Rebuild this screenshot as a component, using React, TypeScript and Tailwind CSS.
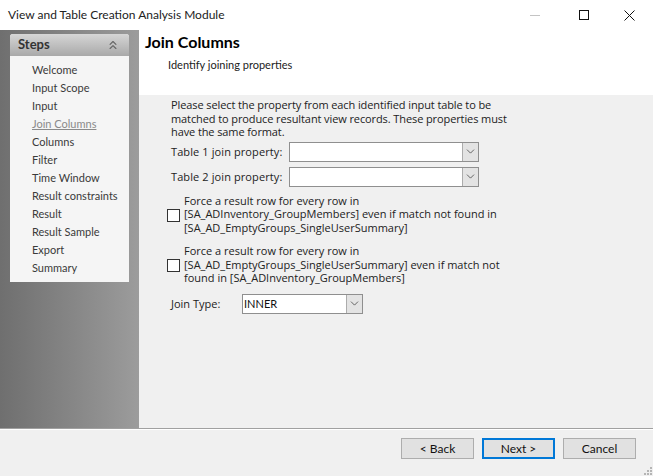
import { ChevronDown, ChevronsUp } from 'lucide-react';

const STEPS = ['Welcome', 'Input Scope', 'Input', 'Join Columns', 'Columns', 'Filter', 'Time Window', 'Result constraints', 'Result', 'Result Sample', 'Export', 'Summary'];

function Combo({ width, value, className }: { width: string; value?: string; className?: string }) {
  return (
    <div className={`flex h-[20px] border border-[#8f8f8f] bg-white ${width} ${className || ''}`}>
      <div className="flex-1 pl-[1px] font-['Lato',sans-serif] text-[11px] leading-[18px] text-[#111]">{value}</div>
      <div className="flex w-[16px] items-center justify-center border-l border-[#acacac] bg-[#e3e3e3]">
        <ChevronDown size={13} strokeWidth={1.1} className="text-[#111]" />
      </div>
    </div>
  );
}

function ForceRow({ lines, className }: { lines: string[]; className?: string }) {
  return (
    <div className={`flex items-center ${className || ''}`}>
      <div className="mt-[3px] h-[13px] w-[13px] shrink-0 border border-[#333] bg-white" />
      <div className="ml-[4px] leading-[13.5px]">
        {lines.map((l) => <div key={l} className="whitespace-nowrap">{l}</div>)}
      </div>
    </div>
  );
}

function WizButton({ label, primary }: { label: string; primary?: boolean }) {
  return (
    <div className={`flex h-[21px] w-[73px] items-center justify-center bg-[#e1e1e1] font-['Lato',sans-serif] text-[12px] text-[#111] ${primary ? 'border-2 border-[#0078d7]' : 'border border-[#adadad]'}`}>
      {label}
    </div>
  );
}

export default function App() {
  return (
    <div className="relative flex h-[476px] w-[653px] flex-col overflow-hidden bg-[#f0f0f0] font-['Open_Sans',sans-serif] text-[11px] text-[#222]">
      {/* Titlebar */}
      <div className="flex h-[30px] shrink-0 items-center bg-white pl-[8px] text-[#222]">
        <span className="flex-1 font-['Lato',sans-serif] text-[12px]">View and Table Creation Analysis Module</span>
        <div className="mr-[39px] h-[1px] w-[10px] bg-[#c4c4c4]" />
        <div className="mr-[35px] h-[10px] w-[10px] border border-[#111]" />
        <svg width="11" height="11" viewBox="0 0 11 11" className="mr-[18px]" stroke="#111" fill="none">
          <path d="M0.5 0.5 L10.5 10.5 M10.5 0.5 L0.5 10.5" />
        </svg>
      </div>

      <div className="flex h-[398px] shrink-0">
        {/* Left side */}
        <div className="w-[139px] shrink-0 bg-gradient-to-r from-[#6f6f6f] to-[#9c9c9c] pl-[10px] pt-[4px]">
          <div className="h-[248px] w-[119px] overflow-hidden rounded-t-[3px] bg-[#f5f5f5]">
            <div className="flex h-[22px] items-center justify-between bg-gradient-to-b from-[#d6d6d6] to-[#a9a9a9] pl-[8px] pr-[9px]">
              <span className="font-['Lato',sans-serif] text-[13px] font-bold text-[#333]">Steps</span>
              <ChevronsUp size={14} strokeWidth={2} className="text-[#666]" />
            </div>
            <div className="pl-[22px] pt-[5px] font-['Lato',sans-serif] text-[11px]">
              {STEPS.map((s) => (
                <div key={s} className={`h-[18px] whitespace-nowrap leading-[18px] ${s === 'Join Columns' ? 'text-[#8a8a8a] underline' : 'text-[#3a3a3a]'}`}>{s}</div>
              ))}
            </div>
          </div>
        </div>

        {/* Right side */}
        <div className="flex-1">
          <div className="h-[65px] bg-white pl-[6px] pt-[2px]">
            <div className="font-['Lato',sans-serif] text-[16px] font-bold leading-[20px] text-black">Join Columns</div>
            <div className="pl-[23px] pt-[5px] font-['Lato',sans-serif] text-[11px] leading-[16px]">Identify joining properties</div>
          </div>
          <div className="pl-[28px] pt-[3px]">
            <div className="pl-[4px] leading-[13.5px] tracking-[-0.1px]">
              <div className="whitespace-nowrap">Please select the property from each identified input table to be</div>
              <div className="whitespace-nowrap">matched to produce resultant view records. These properties must</div>
              <div className="whitespace-nowrap">have the same format.</div>
            </div>
            <div className="mt-[3px] flex items-center pl-[4px]">
              <span className="w-[118px] whitespace-nowrap pt-[1px] tracking-[0.1px]">Table 1 join property:</span>
              <Combo width="w-[190px]" />
            </div>
            <div className="mt-[5px] flex items-center pl-[4px]">
              <span className="w-[118px] whitespace-nowrap pt-[1px] tracking-[0.1px]">Table 2 join property:</span>
              <Combo width="w-[190px]" />
            </div>
            <ForceRow className="mt-[7px]" lines={['Force a result row for every row in', '[SA_ADInventory_GroupMembers] even if match not found in', '[SA_AD_EmptyGroups_SingleUserSummary]']} />
            <ForceRow className="mt-[10px]" lines={['Force a result row for every row in', '[SA_AD_EmptyGroups_SingleUserSummary] even if match not', 'found in [SA_ADInventory_GroupMembers]']} />
            <div className="mt-[9px] flex items-center pl-[4px]">
              <span className="w-[71px] whitespace-nowrap pt-[1px]">Join Type:</span>
              <Combo width="w-[121px]" value="INNER" />
            </div>
          </div>
        </div>
      </div>

      {/* Footer */}
      <div className="flex flex-1 items-start justify-end gap-[8px] border-t border-[#a0a0a0] pr-[17px] pt-[9px] shadow-[inset_0_1px_0_#fff]">
        <WizButton label="< Back" />
        <WizButton label="Next >" primary />
        <WizButton label="Cancel" />
      </div>
      <svg width="10" height="10" viewBox="0 0 10 10" className="absolute bottom-[0px] right-[0px]" fill="#b5b5b5">
        <rect x="7" y="1" width="2" height="2" /><rect x="4" y="4" width="2" height="2" /><rect x="7" y="4" width="2" height="2" />
        <rect x="1" y="7" width="2" height="2" /><rect x="4" y="7" width="2" height="2" /><rect x="7" y="7" width="2" height="2" />
      </svg>
    </div>
  );
}
